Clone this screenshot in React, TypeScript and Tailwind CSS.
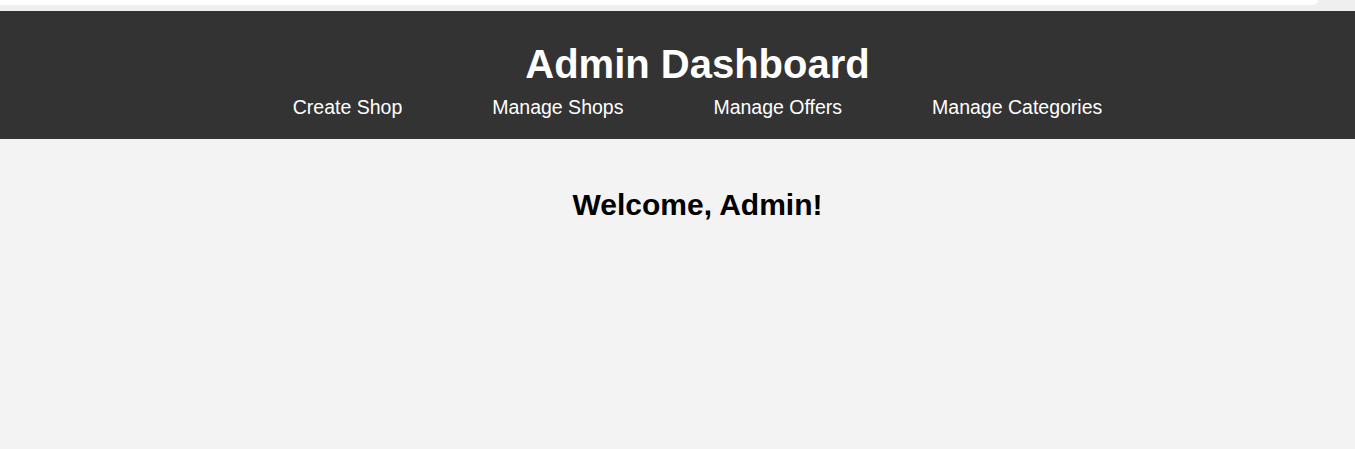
const links = ["Create Shop", "Manage Shops", "Manage Offers", "Manage Categories"];

export default function App() {
  return (
    <div className="min-h-screen w-full overflow-hidden bg-[#f3f3f3] font-['Liberation_Sans',Arial,sans-serif]">
      {/* top strip */}
      <div className="h-[11px] w-full bg-[#efefef]">
        <div className="h-[5px] w-[1318px] rounded-br-[10px] bg-white"></div>
      </div>

      <div className="w-[1395px]">
        {/* Header */}
        <header className="bg-[#333333] pt-[31px] pb-[21px] text-center text-white">
          <h1 className="text-[40px] font-bold leading-[45px]">Admin Dashboard</h1>
          <nav className="mt-[9px] flex justify-center gap-[90px]">
            {links.map((l) => (
              <a key={l} href="#" className="text-[19.5px] leading-[22px] text-white">
                {l}
              </a>
            ))}
          </nav>
        </header>

        {/* Main */}
        <main className="pt-[49px] text-center">
          <h2 className="text-[30px] font-bold leading-[34px] text-black">Welcome, Admin!</h2>
        </main>
      </div>
    </div>
  );
}
